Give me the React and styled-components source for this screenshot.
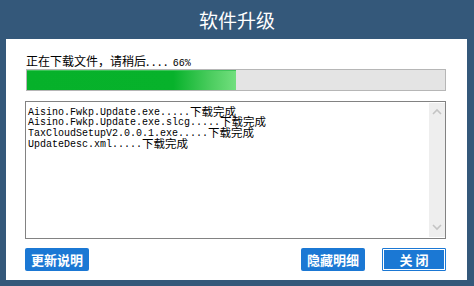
import React from 'react';
import styled, { createGlobalStyle } from 'styled-components';

const GlobalStyle = createGlobalStyle`
    html, body {
        margin: 0;
        padding: 0;
        background: #34587a;
    }
    body {
        font-family: "Noto Sans CJK SC", "Noto Sans", sans-serif;
    }
`

const Window = styled.div`
    width: 474px;
    height: 286px;
    display: flex;
    flex-direction: column;
    background: #34587a;
`

const TitleBar = styled.div`
    height: 39px;
    display: flex;
    align-items: center;
    justify-content: center;
    color: #ffffff;
    font-size: 19px;
    padding-bottom: 1px;
    box-sizing: border-box;
`

const Panel = styled.div`
    margin: 0 7px 0 6px;
    height: 241px;
    background: #ffffff;
    box-sizing: border-box;
    padding: 15px 21px 9px 19px;
    display: flex;
    flex-direction: column;
`

const StatusLabel = styled.div`
    font-size: 12px;
    line-height: 14px;
    height: 14px;
    margin: 0 0 1px 1px;
    color: #000;
    white-space: pre;

    span {
        font-family: "Liberation Mono", monospace;
        font-size: 10px;
    }
`

const ProgressTrack = styled.div`
    height: 22px;
    margin-left: 1px;
    border: 1px solid #b6b6b6;
    background: #e4e4e4;
    box-sizing: border-box;
    display: flex;
`

const ProgressFill = styled.div`
    height: 100%;
    background: linear-gradient(to right, #06b12a 0%, #07b22b 70%, #4ccd5f 88%, #72df7e 100%);
    box-shadow: inset 0 1px 0 #3ec55a;
`

const LogBox = styled.div`
    margin-top: 10px;
    height: 138px;
    border: 1px solid #828282;
    box-sizing: border-box;
    display: flex;
`

const LogText = styled.div`
    flex: 1;
    padding: 5px 0 0 2px;
    color: #000;
    white-space: pre;
    overflow: hidden;
`

const LogLine = styled.div`
    height: 10.67px;
    display: flex;
    align-items: flex-end;
`

const Mono = styled.span`
    font-family: "Liberation Mono", monospace;
    font-size: 10px;
    line-height: 11px;
`

const Status = styled.span`
    font-size: 11.5px;
    line-height: 12px;
    margin-bottom: 1px;
`

const ScrollBar = styled.div`
    width: 16px;
    margin: 1px 0 1px 0;
    background: #eeeeee;
    display: flex;
    flex-direction: column;
    justify-content: space-between;
    align-items: center;
    padding: 5px 0 6px;
    box-sizing: border-box;
`

const ButtonRow = styled.div`
    margin-top: 9px;
    display: flex;
    align-items: center;
`

const Spacer = styled.div`
    flex: 1;
`

const BlueButton = styled.div`
    width: 64px;
    height: 23px;
    box-sizing: border-box;
    background: #1b78d4;
    color: #ffffff;
    font-size: 13px;
    font-weight: 700;
    border-radius: 2px;
    display: flex;
    align-items: center;
    justify-content: center;
    white-space: pre;
    margin-left: ${props => props.gap || 0}px;
    ${props => props.outlined && `
        border: 1px solid #1b78d4;
        box-shadow: inset 0 0 0 1px #ffffff;
        border-radius: 1px;
    `}
`

const Chevron = ({ up }) => (
    <svg width="10" height="7" viewBox="0 0 10 7">
        <path
            d={up ? 'M1 6 L5 2 L9 6' : 'M1 1 L5 5 L9 1'}
            fill="none"
            stroke="#c4c4c4"
            strokeWidth="1.6"
        />
    </svg>
)

const logs = [
    ['Aisino.Fwkp.Update.exe.....', '下载完成'],
    ['Aisino.Fwkp.Update.exe.slcg.....', '下载完成'],
    ['TaxCloudSetupV2.0.0.1.exe.....', '下载完成'],
    ['UpdateDesc.xml.....', '下载完成'],
]

const App = () => {
    const percent = 50
    return (
        <Window>
            <GlobalStyle />
            <TitleBar>软件升级</TitleBar>
            <Panel>
                <StatusLabel>正在下载文件，请稍后. . . .  <span>66%</span></StatusLabel>
                <ProgressTrack>
                    <ProgressFill style={{ width: `${percent}%` }} />
                </ProgressTrack>
                <LogBox>
                    <LogText>
                        {logs.map(([file, status]) => (
                            <LogLine key={file}>
                                <Mono>{file}</Mono>
                                <Status>{status}</Status>
                            </LogLine>
                        ))}
                    </LogText>
                    <ScrollBar>
                        <Chevron up />
                        <Chevron />
                    </ScrollBar>
                </LogBox>
                <ButtonRow>
                    <BlueButton>更新说明</BlueButton>
                    <Spacer />
                    <BlueButton>隐藏明细</BlueButton>
                    <BlueButton outlined gap={17}>关 闭</BlueButton>
                </ButtonRow>
            </Panel>
        </Window>
    );
};

export default App;
